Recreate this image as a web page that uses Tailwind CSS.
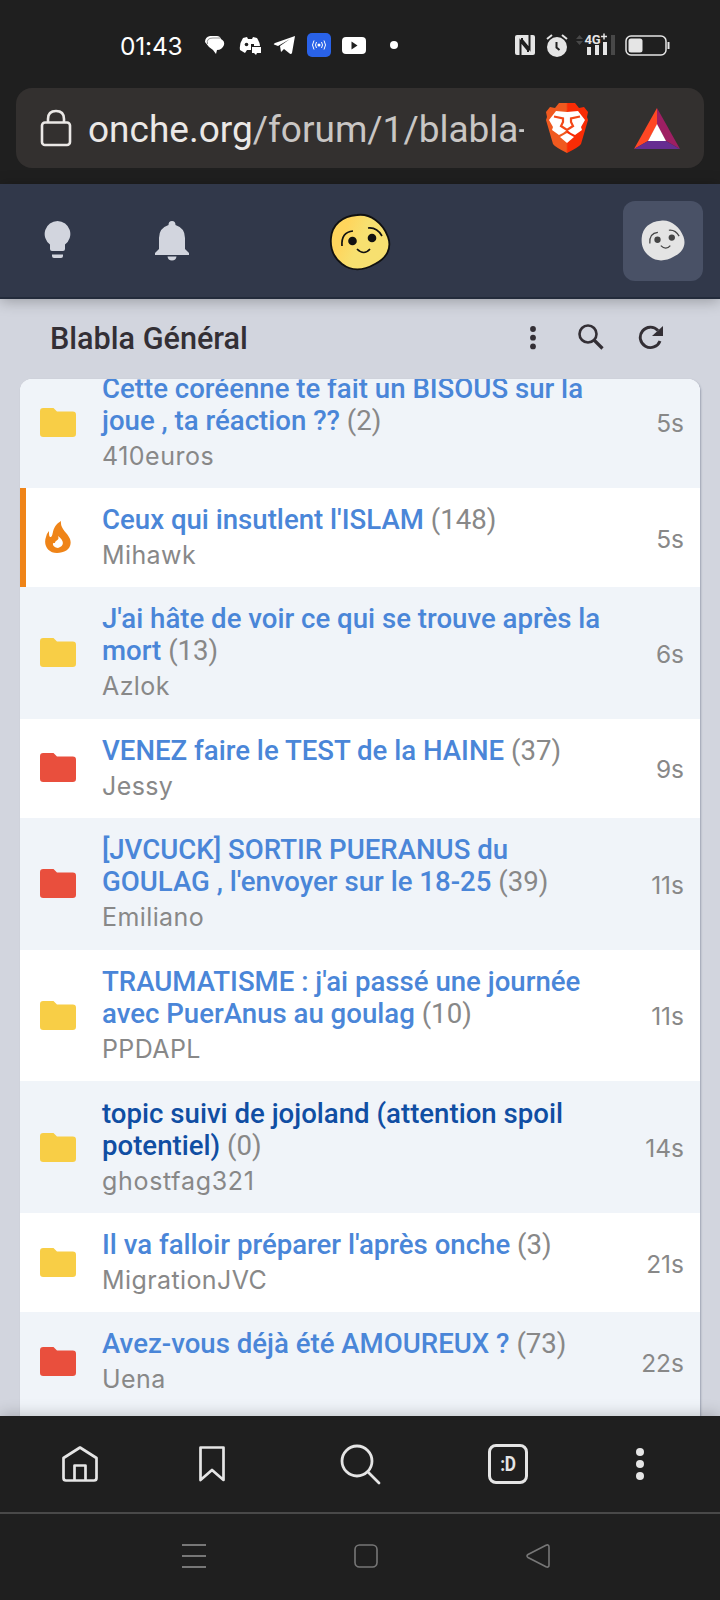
<!DOCTYPE html>
<html lang="fr"><head><meta charset="utf-8"><title>Blabla Général</title>
<script src="https://cdn.jsdelivr.net/npm/@tailwindcss/browser@4"></script></head>
<body class="w-[720px] h-[1600px] overflow-hidden flex flex-col bg-[#d2d5de] font-['Roboto',sans-serif]">
<svg class="hidden"><defs>
<symbol id="folder" viewBox="0 0 36 29"><path d="M3.2 0H13.5L17 3.6H32.8Q36 3.6 36 6.8V25.8Q36 29 32.8 29H3.2Q0 29 0 25.8V3.2Q0 0 3.2 0Z" fill="currentColor"/></symbol>
<symbol id="face" viewBox="0 0 60 56"><path d="M27 1C40-1 53 9 58 23C62 34 57 44 45 50C33 57 21 57 12 50C3 43 0 34 1 24C2 11 12 2 27 1Z" fill="currentColor"/></symbol>
</defs></svg>
<header class="h-[184px] shrink-0 bg-[#1f1f1f] flex flex-col">
<div class="h-[88px] flex items-center pl-[120px] pr-[50px] pt-[2px] text-white">
<span class="text-[24.5px] font-normal w-[85px] mt-[2px] tracking-[-0.2px] font-['Inter',sans-serif]">01:43</span>
<svg class="w-[20px] h-[20px]" viewBox="0 0 20 20"><path d="M5 1H12Q15 1 16 4Q20 6 19 10Q17 15 12 15L11 19L8 15L4 12L0 7Q0 2 5 1Z" fill="#fff"/><path d="M2.500 9Q1 3 8 3H15" fill="none" stroke="#777" stroke-width=".8"/></svg>
<svg class="w-[22px] h-[19px] ml-[14px]" viewBox="0 0 22 19"><path d="M4 2L8 1L9 3H13L14 1L18 2Q21 7 21 10H12V14H8L6 17L1 14Q0 8 4 2Z" fill="#fff"/><circle cx="7.500" cy="8.500" r="1.800" fill="#1f1f1f"/><path d="M12 8H15V10H12Z" fill="#1f1f1f"/><path d="M13 11H22V17H18L17 19L15 17H13Z" fill="#fff"/></svg>
<svg class="w-[23px] h-[20px] ml-[12px]" viewBox="0 0 23 20"><path d="M22 1L19 18Q18 20 16 18L11 14L8 17L7 11L17 4L5 11L1 9.500Q0 9 2 8Z" fill="#fff"/></svg>
<svg class="w-[24px] h-[24px] ml-[11px]" viewBox="0 0 24 24"><rect width="24" height="24" rx="5" fill="#2962e8"/><circle cx="12" cy="12" r="1.500" fill="#fff"/><path d="M9.500 9Q7.500 12 9.500 15M7 7.500Q4 12 7 16.500M14.500 9Q16.500 12 14.500 15M17 7.500Q20 12 17 16.500" fill="none" stroke="#fff"/></svg>
<svg class="w-[24px] h-[17px] ml-[11px]" viewBox="0 0 24 17"><rect width="24" height="17" rx="4" fill="#fff"/><path d="M9.500 4.500V12.500L15.500 8.500Z" fill="#1f1f1f"/></svg>
<i class="size-[8px] rounded-full bg-white ml-[24px]"></i>
<svg class="w-[20px] h-[20px] ml-auto" viewBox="0 0 20 20"><rect width="20" height="20" rx="2" fill="#e5e5e5"/><path d="M5.500 20V6L13 15V17M14.500 0V14L7 5V3" fill="none" stroke="#1f1f1f" stroke-width="2"/></svg>
<svg class="w-[22px] h-[23px] ml-[11px]" viewBox="0 0 22 23"><circle cx="11" cy="13" r="10" fill="#e5e5e5"/><path d="M1 5L6 1M21 5L16 1" stroke="#e5e5e5" stroke-width="2"/><path d="M10.500 8V13.500L13.500 16" fill="none" stroke="#1f1f1f" stroke-width="2"/></svg>
<svg class="w-[40px] h-[24px] ml-[8px]" viewBox="0 0 40 24"><path d="M0 6L3.500 2L7 6ZM0 8L3.500 12L7 8Z" fill="#484848"/><text x="8.500" y="10.500" font-family="Roboto" font-weight="700" font-size="13" fill="#e5e5e5" textLength="16">4G</text><path d="M25 3.500H31M28 .5V6.500" stroke="#e5e5e5" stroke-width="1.500"/><path d="M11 14H15V22H11ZM19 12H23V22H19ZM27 9H31V22H27Z" fill="#e5e5e5"/><path d="M35 2H39V22H35Z" fill="#484848"/></svg>
<svg class="w-[45px] h-[21px] ml-[9px]" viewBox="0 0 45 21"><rect x="1" y="1" width="40" height="19" rx="5" fill="none" stroke="#e5e5e5" stroke-width="1.500"/><rect x="3.500" y="3.500" width="14" height="14" rx="2.500" fill="#e5e5e5"/><path d="M43.500 7V14" stroke="#e5e5e5" stroke-width="2"/></svg>
</div>
<div class="h-[80px] mx-[16px] rounded-[16px] bg-[#33302f] flex items-center">
<svg class="w-[32px] h-[38px] ml-[24px]" viewBox="0 0 32 38"><rect x="2" y="13.500" width="28" height="22.500" rx="3" fill="none" stroke="#ebe8e6" stroke-width="2.600"/><path d="M8 13V10Q8 2 16 2Q24 2 24 10V13" fill="none" stroke="#ebe8e6" stroke-width="2.600"/></svg>
<div class="w-[436px] ml-[16px] mt-[4px] overflow-hidden whitespace-nowrap text-[37px] leading-[50px] text-[#ebe8e6]">onche.org<span class="text-[#c9c6c4]">/forum/1/blabla-</span></div>
<svg class="w-[44px] h-[52px] ml-[21px]" viewBox="0 0 44 52"><defs><linearGradient id="g"><stop offset=".48" stop-color="#f0591f"/><stop offset=".52" stop-color="#f92c05"/></linearGradient></defs><path d="M14 1H30L34 6L39 5L43 10L42 15L43 18L36 42Q34 45 22 51Q10 45 8 42L1 18L2 15L1 10L5 5L10 6Z" fill="url(#g)"/><path d="M11 9L22 10L33 9L40 18L36 25L37 28L30 33L26 31L22 28L18 31L14 33L7 28L8 25L4 18Z" fill="#fff"/><path d="M15 35L22 31L29 35L22 41Z" fill="#fff"/><path d="M9 14.500L18 16.500V20L16 24L22 28L28 24L26 20V16.500L35 14.500" fill="none" stroke="#f34818" stroke-width="2.200"/></svg>
<svg class="w-[46px] h-[41px] ml-[45px]" viewBox="0 0 46 41"><path d="M23 0L0 41L14 33L23 17Z" fill="#ff4724"/><path d="M23 0L46 41L32 33L23 17Z" fill="#9e1f63"/><path d="M0 41L14 33H32L46 41Z" fill="#662d91"/><path d="M23 16L14 33H32Z" fill="#fff"/></svg>
</div></header>
<nav class="relative z-10 h-[115px] shrink-0 bg-[#31384a] border-b-2 border-[#232b3b] shadow-[0_2px_14px_rgba(0,0,0,.28)] flex items-center pl-[44px] pr-[17px]">
<svg class="w-[27px] h-[38px] -mt-[2px]" viewBox="0 0 27 38"><path d="M13.500 0A13 13 0 0 1 21 23.500V28Q21 30 19 30H8Q6 30 6 28V23.500A13 13 0 0 1 13.500 0ZM8 33.500H19V35Q19 37 17 37H10Q8 37 8 35Z" fill="#d2d5de"/></svg>
<svg class="w-[34px] h-[40px] ml-[84px]" viewBox="0 0 34 40"><path d="M17 0Q20.500 0 20.500 4Q30 7 30 17V28L34 32V34H0V32L4 28V17Q4 7 13.500 4Q13.500 0 17 0ZM12.500 35.500H21.500Q21 39.500 17 39.500Q13 39.500 12.500 35.500Z" fill="#d2d5de"/></svg>
<svg class="w-[62px] h-[58px] ml-[140px] overflow-visible mt-[3px]" viewBox="-1 -1 62 58"><defs><linearGradient id="y" y2=".4"><stop offset=".3" stop-color="#ffd55c"/><stop offset=".6" stop-color="#f7e070"/></linearGradient></defs><path d="M27 1C40-1 53 9 58 23C62 34 57 44 45 50C33 57 21 57 12 50C3 43 0 34 1 24C2 11 12 2 27 1Z" fill="url(#y)" stroke="#111" stroke-width="1.800"/><g id="features"><circle cx="22.500" cy="27" r="4.300" fill="#111"/><circle cx="42" cy="24" r="4.300" fill="#111"/><path d="M12 32Q11 18 23 17M38 14Q47 13 52 22M27 35Q34 42 40 35" fill="none" stroke="#111" stroke-width="1.700"/></g></svg>
<div class="size-[80px] ml-auto rounded-[12px] bg-[#495166] flex items-center justify-center"><svg class="w-[44px] h-[41px]" viewBox="0 0 60 56"><use href="#face" class="text-[#e4e4e4]"/><use href="#features" opacity=".75"/></svg></div>
</nav>
<div class="h-[80px] shrink-0 flex items-center pl-[50px] pr-[57px] text-[#332f35]">
<h1 class="text-[30.6px] font-medium -mt-[1px]">Blabla Général</h1>
<svg class="w-[8px] h-[24px] ml-auto mb-[3px]" viewBox="0 0 8 24"><g fill="currentColor"><circle cx="4" cy="3" r="2.900"/><circle cx="4" cy="11.700" r="2.900"/><circle cx="4" cy="20.400" r="2.900"/></g></svg>
<svg class="size-[26px] ml-[41px] mb-[4px]" viewBox="0 0 26 26"><circle cx="10" cy="10" r="8.500" fill="none" stroke="currentColor" stroke-width="2.600"/><path d="M16 16L24.500 24.500" stroke="currentColor" stroke-width="3.200"/></svg>
<svg class="size-[25px] ml-[34px] mb-[3px]" viewBox="0 0 25 25"><path d="M20 5.500A10.200 10.200 0 1 0 22 16" fill="none" stroke="currentColor" stroke-width="2.900"/><path d="M25 1V11H14Z" fill="currentColor"/></svg>
</div>
<main class="relative mx-[20px] h-[1037px] shrink-0 rounded-t-[12px] shadow-[1px_1px_2px_rgba(90,100,125,.45)]"><div class="h-full overflow-hidden rounded-t-[12px] bg-white text-[27.6px] leading-[32px] text-[#888]">
<article class="-mt-[22px] h-[131px] pt-[1px] bg-[#f0f4f9] flex items-center pl-[20px] pr-[16px]"><svg class="w-[36px] h-[29px] -mt-[2px] text-[#f8ce46] shrink-0"><use href="#folder"/></svg><div class="ml-[26px] grow whitespace-nowrap"><p><b class="font-medium text-[#4a86d8]">Cette coréenne te fait un BISOUS sur la<br>joue , ta réaction ??</b> (2)</p><p class="mt-[2px] text-[25px] tracking-[.5px] leading-[35px] font-['Inter',sans-serif]">410euros</p></div><time class="text-[24.5px] font-['Inter',sans-serif]">5s</time></article>
<article class="h-[99px] pt-[2px] flex items-center border-l-[6px] border-[#ef8418] pl-[19px] pr-[16px]"><svg class="w-[26px] h-[33px] -mt-[3px] text-[#ef8418] shrink-0" viewBox="0 0 26 33"><path d="M16 0C15 8 22 11 25 18C28 27 20 32 12 32C3 32-2 24 1 16Q2 12 4 10C4 14 4 16 6 16C9 14 6 6 16 0ZM13 15C15 20 10 19 10 22C6 21 8 27 13 27C20 25 19 19 13 15Z" fill="currentColor"/></svg><div class="ml-[31px] grow whitespace-nowrap"><p><b class="font-medium text-[#4a86d8]">Ceux qui insutlent l'ISLAM</b> (148)</p><p class="mt-[2px] text-[25px] tracking-[.4px] leading-[35px] font-['Inter',sans-serif]">Mihawk</p></div><time class="text-[24.5px] font-['Inter',sans-serif]">5s</time></article>
<article class="h-[131.75px] pt-[2px] bg-[#f0f4f9] flex items-center pl-[20px] pr-[16px]"><svg class="w-[36px] h-[29px] -mt-[2px] text-[#f8ce46] shrink-0"><use href="#folder"/></svg><div class="ml-[26px] grow whitespace-nowrap"><p><b class="font-medium text-[#4a86d8]">J'ai hâte de voir ce qui se trouve après la<br>mort</b> (13)</p><p class="mt-[2px] text-[25px] tracking-[.4px] leading-[35px] font-['Inter',sans-serif]">Azlok</p></div><time class="text-[24.5px] font-['Inter',sans-serif]">6s</time></article>
<article class="h-[99px] pt-[2px] flex items-center pl-[20px] pr-[16px]"><svg class="w-[36px] h-[29px] -mt-[3px] text-[#e94f3d] shrink-0"><use href="#folder"/></svg><div class="ml-[26px] grow whitespace-nowrap"><p><b class="font-medium text-[#4a86d8]">VENEZ faire le TEST de la HAINE</b> (37)</p><p class="mt-[2px] text-[25px] tracking-[.4px] leading-[35px] font-['Inter',sans-serif]">Jessy</p></div><time class="text-[24.5px] font-['Inter',sans-serif]">9s</time></article>
<article class="h-[131.75px] pt-[2px] bg-[#f0f4f9] flex items-center pl-[20px] pr-[16px]"><svg class="w-[36px] h-[29px] -mt-[2px] text-[#e94f3d] shrink-0"><use href="#folder"/></svg><div class="ml-[26px] grow whitespace-nowrap"><p><b class="font-medium text-[#4a86d8]">[JVCUCK] SORTIR PUERANUS du<br>GOULAG , l'envoyer sur le 18-25</b> (39)</p><p class="mt-[2px] text-[25px] tracking-[.4px] leading-[35px] font-['Inter',sans-serif]">Emiliano</p></div><time class="text-[24.5px] font-['Inter',sans-serif]">11s</time></article>
<article class="h-[131.75px] pt-[2px] flex items-center pl-[20px] pr-[16px]"><svg class="w-[36px] h-[29px] -mt-[2px] text-[#f8ce46] shrink-0"><use href="#folder"/></svg><div class="ml-[26px] grow whitespace-nowrap"><p><b class="font-medium text-[#4a86d8]">TRAUMATISME : j'ai passé une journée<br>avec PuerAnus au goulag</b> (10)</p><p class="mt-[2px] text-[25px] tracking-[.4px] leading-[35px] font-['Inter',sans-serif]">PPDAPL</p></div><time class="text-[24.5px] font-['Inter',sans-serif]">11s</time></article>
<article class="h-[131.75px] pt-[2px] bg-[#f0f4f9] flex items-center pl-[20px] pr-[16px]"><svg class="w-[36px] h-[29px] -mt-[2px] text-[#f8ce46] shrink-0"><use href="#folder"/></svg><div class="ml-[26px] grow whitespace-nowrap"><p><b class="font-medium text-[#104ea3]">topic suivi de jojoland (attention spoil<br>potentiel)</b> (0)</p><p class="mt-[2px] text-[25px] tracking-[.7px] leading-[35px] font-['Inter',sans-serif]">ghostfag321</p></div><time class="text-[24.5px] font-['Inter',sans-serif]">14s</time></article>
<article class="h-[99px] pt-[2px] flex items-center pl-[20px] pr-[16px]"><svg class="w-[36px] h-[29px] -mt-[3px] text-[#f8ce46] shrink-0"><use href="#folder"/></svg><div class="ml-[26px] grow whitespace-nowrap"><p><b class="font-medium text-[#4a86d8]">Il va falloir préparer l'après onche</b> (3)</p><p class="mt-[2px] text-[25px] tracking-[.4px] leading-[35px] font-['Inter',sans-serif]">MigrationJVC</p></div><time class="text-[24.5px] font-['Inter',sans-serif]">21s</time></article>
<article class="h-[105px] pb-[4px] bg-[#f0f4f9] flex items-center pl-[20px] pr-[16px]"><svg class="w-[36px] h-[29px] -mt-[3px] text-[#e94f3d] shrink-0"><use href="#folder"/></svg><div class="ml-[26px] grow whitespace-nowrap"><p><b class="font-medium text-[#4a86d8]">Avez-vous déjà été AMOUREUX ?</b> (73)</p><p class="mt-[2px] text-[25px] tracking-[.4px] leading-[35px] font-['Inter',sans-serif]">Uena</p></div><time class="text-[24.5px] font-['Inter',sans-serif]">22s</time></article>
</div></main>
<footer class="relative z-10 h-[184px] shrink-0 bg-[#1f1f1f] shadow-[0_-2px_14px_rgba(0,0,0,.2)]">
<div class="h-[98px] border-b-2 border-[#494949] flex items-center pl-[60px] pr-[76px] text-[#e5e5e5]">
<svg class="size-[40px]" viewBox="0 0 40 40" fill="none" stroke="currentColor" stroke-width="2.700" stroke-linejoin="round"><path d="M20 3.500L36.500 14V34Q36.500 36.500 34 36.500H6Q3.500 36.500 3.500 34V14Z"/><path d="M14.500 36V21.500H25.500V36"/></svg>
<svg class="w-[26px] h-[36px] ml-[99px]" viewBox="0 0 26 36" fill="none" stroke="currentColor" stroke-width="2.700" stroke-linejoin="round"><path d="M1.500 1.500H24.500V34L13 24L1.500 34Z"/></svg>
<svg class="w-[42px] h-[42px] ml-[115px] mt-[2px]" viewBox="0 0 42 42" fill="none" stroke="currentColor" stroke-width="2.800" stroke-linecap="round"><circle cx="17" cy="17" r="15"/><path d="M28 28L39 39"/></svg>
<div class="size-[40px] ml-[106px] rounded-[8px] border-[3px] border-[#e5e5e5] flex items-center justify-center text-[20px] font-bold leading-none"><span class="scale-x-[.86] tracking-[-.5px]">:D</span></div>
<svg class="w-[8px] h-[32px] ml-auto" viewBox="0 0 8 32"><g fill="currentColor"><circle cx="4" cy="4" r="4"/><circle cx="4" cy="16" r="4"/><circle cx="4" cy="28" r="4"/></g></svg>
</div>
<div class="h-[84px] flex items-center pl-[182px] text-[#777]">
<svg class="w-[24px] h-[24px]" viewBox="0 0 24 24"><path d="M0 1H24M0 12H24M0 23H24" stroke="currentColor" stroke-width="1.800"/></svg>
<svg class="size-[24px] ml-[148px]" viewBox="0 0 24 24"><rect x="1" y="1" width="22" height="22" rx="4.500" fill="none" stroke="currentColor" stroke-width="1.600"/></svg>
<svg class="size-[24px] ml-[148px]" viewBox="0 0 24 24"><path d="M2 10.500L20 1.300Q23 0 23 3V21Q23 24 20 22.700L2 13.500Q0 12 2 10.500Z" fill="none" stroke="currentColor" stroke-width="1.600"/></svg>
</div></footer>
</body></html>
